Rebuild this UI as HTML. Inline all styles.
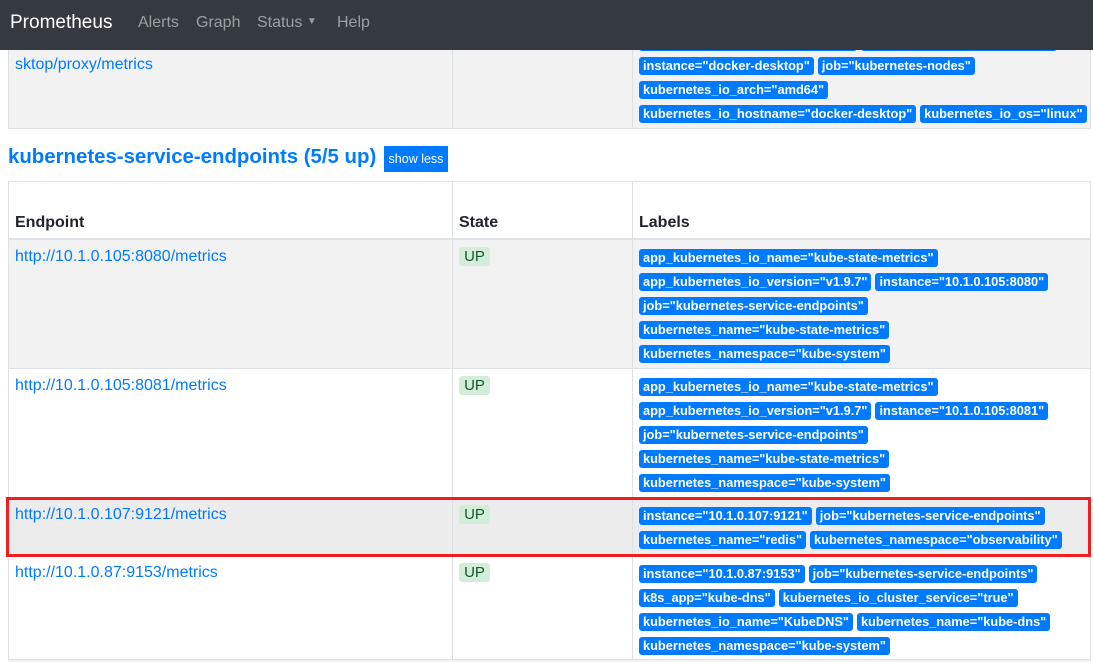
<!DOCTYPE html>
<html><head><meta charset="utf-8"><style>
*{box-sizing:border-box;margin:0;padding:0}
body{width:1093px;height:662px;overflow:hidden;background:#fff;font-family:"Liberation Sans",Arial,sans-serif;position:relative;color:#212529}
.nav{position:absolute;left:0;top:0;width:1093px;height:50px;background:#343a40;z-index:5}
.nav span{position:absolute;top:14px;font-size:16px;color:rgba(255,255,255,.5)}
.row{position:absolute;left:8px;width:1083px;border-left:1px solid #dee2e6;border-right:1px solid #dee2e6;border-top:1px solid #dee2e6}
.row .c1,.row .c2{position:absolute;top:0;bottom:0;border-right:1px solid #dee2e6}
.c1{left:0;width:444px}.c2{left:444px;width:180px}
a{color:#007bff;text-decoration:none;font-size:16px;position:absolute;left:6px}
.up{position:absolute;left:450px;width:31px;height:19px;background:#d4edda;border-radius:3px;color:#155724;font-size:15px;text-align:center;line-height:19px}
.lb{position:absolute;left:630px;width:450px}
.l{display:flex;gap:4px;margin-bottom:6px;white-space:nowrap}
.b{display:block;background:#007bff;color:#fff;font-weight:bold;font-size:12.8px;height:18px;line-height:18px;padding:0 4px;border-radius:3px;white-space:nowrap}
.h{font-weight:bold;font-size:16px;position:absolute;top:32px}
</style></head><body>
<div class="nav">
<span style="left:10px;top:12px;font-size:19px;color:#fff">Prometheus</span>
<span style="left:138px">Alerts</span>
<span style="left:196px">Graph</span>
<span style="left:257px">Status <span style="position:relative;top:-3px;left:0;font-size:10px">&#9660;</span></span>
<span style="left:337px">Help</span>
</div>
<div class="row" style="top:20px;height:109px;background:#f2f2f2;border-bottom:1px solid #dee2e6">
<div class="c1"></div><div class="c2"></div>
<a style="top:35px">sktop/proxy/metrics</a>
<div class="lb" style="top:12px"><div class="l"><span class="b" style="width:218px">&nbsp;</span><span class="b" style="width:196px">&nbsp;</span></div>
<div class="l"><span class="b">instance="docker-desktop"</span><span class="b">job="kubernetes-nodes"</span></div>
<div class="l"><span class="b">kubernetes_io_arch="amd64"</span></div>
<div class="l"><span class="b">kubernetes_io_hostname="docker-desktop"</span><span class="b">kubernetes_io_os="linux"</span></div></div>
</div>
<div style="position:absolute;left:8px;top:146px;font-size:20.4px;font-weight:bold;color:#007bff">kubernetes-service-endpoints (5/5 up)</div>
<div style="position:absolute;left:384px;top:146px;width:64px;height:26px;background:#007bff;color:#fff;font-size:12.5px;line-height:26px;text-align:center">show less</div>

<div class="row" style="top:181px;height:59px;border-bottom:2px solid #dee2e6">
<div class="c1"></div><div class="c2"></div>
<div class="h" style="left:6px">Endpoint</div><div class="h" style="left:450px">State</div><div class="h" style="left:630px">Labels</div>
</div>
<div class="row" style="top:239px;height:130px;background:#f2f2f2">
<div class="c1"></div><div class="c2"></div>
<a style="top:8px">http://10.1.0.105:8080/metrics</a><div class="up" style="top:7px">UP</div>
<div class="lb" style="top:9px"><div class="l"><span class="b">app_kubernetes_io_name="kube-state-metrics"</span></div><div class="l"><span class="b">app_kubernetes_io_version="v1.9.7"</span><span class="b">instance="10.1.0.105:8080"</span></div><div class="l"><span class="b">job="kubernetes-service-endpoints"</span></div><div class="l"><span class="b">kubernetes_name="kube-state-metrics"</span></div><div class="l"><span class="b">kubernetes_namespace="kube-system"</span></div></div>
</div>
<div class="row" style="top:368px;height:130px;background:#fff">
<div class="c1"></div><div class="c2"></div>
<a style="top:8px">http://10.1.0.105:8081/metrics</a><div class="up" style="top:7px">UP</div>
<div class="lb" style="top:9px"><div class="l"><span class="b">app_kubernetes_io_name="kube-state-metrics"</span></div><div class="l"><span class="b">app_kubernetes_io_version="v1.9.7"</span><span class="b">instance="10.1.0.105:8081"</span></div><div class="l"><span class="b">job="kubernetes-service-endpoints"</span></div><div class="l"><span class="b">kubernetes_name="kube-state-metrics"</span></div><div class="l"><span class="b">kubernetes_namespace="kube-system"</span></div></div>
</div>
<div class="row" style="top:497px;height:60px;background:#ececec">
<div class="c1"></div><div class="c2"></div>
<a style="top:8px">http://10.1.0.107:9121/metrics</a><div class="up" style="top:7px">UP</div>
<div class="lb" style="top:9px"><div class="l"><span class="b">instance="10.1.0.107:9121"</span><span class="b">job="kubernetes-service-endpoints"</span></div><div class="l"><span class="b">kubernetes_name="redis"</span><span class="b">kubernetes_namespace="observability"</span></div></div>
</div>
<div class="row" style="top:556px;height:106px;background:#fff">
<div class="c1"></div><div class="c2"></div>
<a style="top:7px">http://10.1.0.87:9153/metrics</a><div class="up" style="top:6px">UP</div>
<div class="lb" style="top:8px"><div class="l"><span class="b">instance="10.1.0.87:9153"</span><span class="b">job="kubernetes-service-endpoints"</span></div><div class="l"><span class="b">k8s_app="kube-dns"</span><span class="b">kubernetes_io_cluster_service="true"</span></div><div class="l"><span class="b">kubernetes_io_name="KubeDNS"</span><span class="b">kubernetes_name="kube-dns"</span></div><div class="l"><span class="b">kubernetes_namespace="kube-system"</span></div></div>
</div>
<div style="position:absolute;left:8px;top:659px;width:1083px;height:3px;background:#f2f2f2;border-top:1px solid #dee2e6"></div>
<div style="position:absolute;left:6px;top:497px;width:1085px;height:60px;border:3px solid #f01e1e"></div>
</body></html>
